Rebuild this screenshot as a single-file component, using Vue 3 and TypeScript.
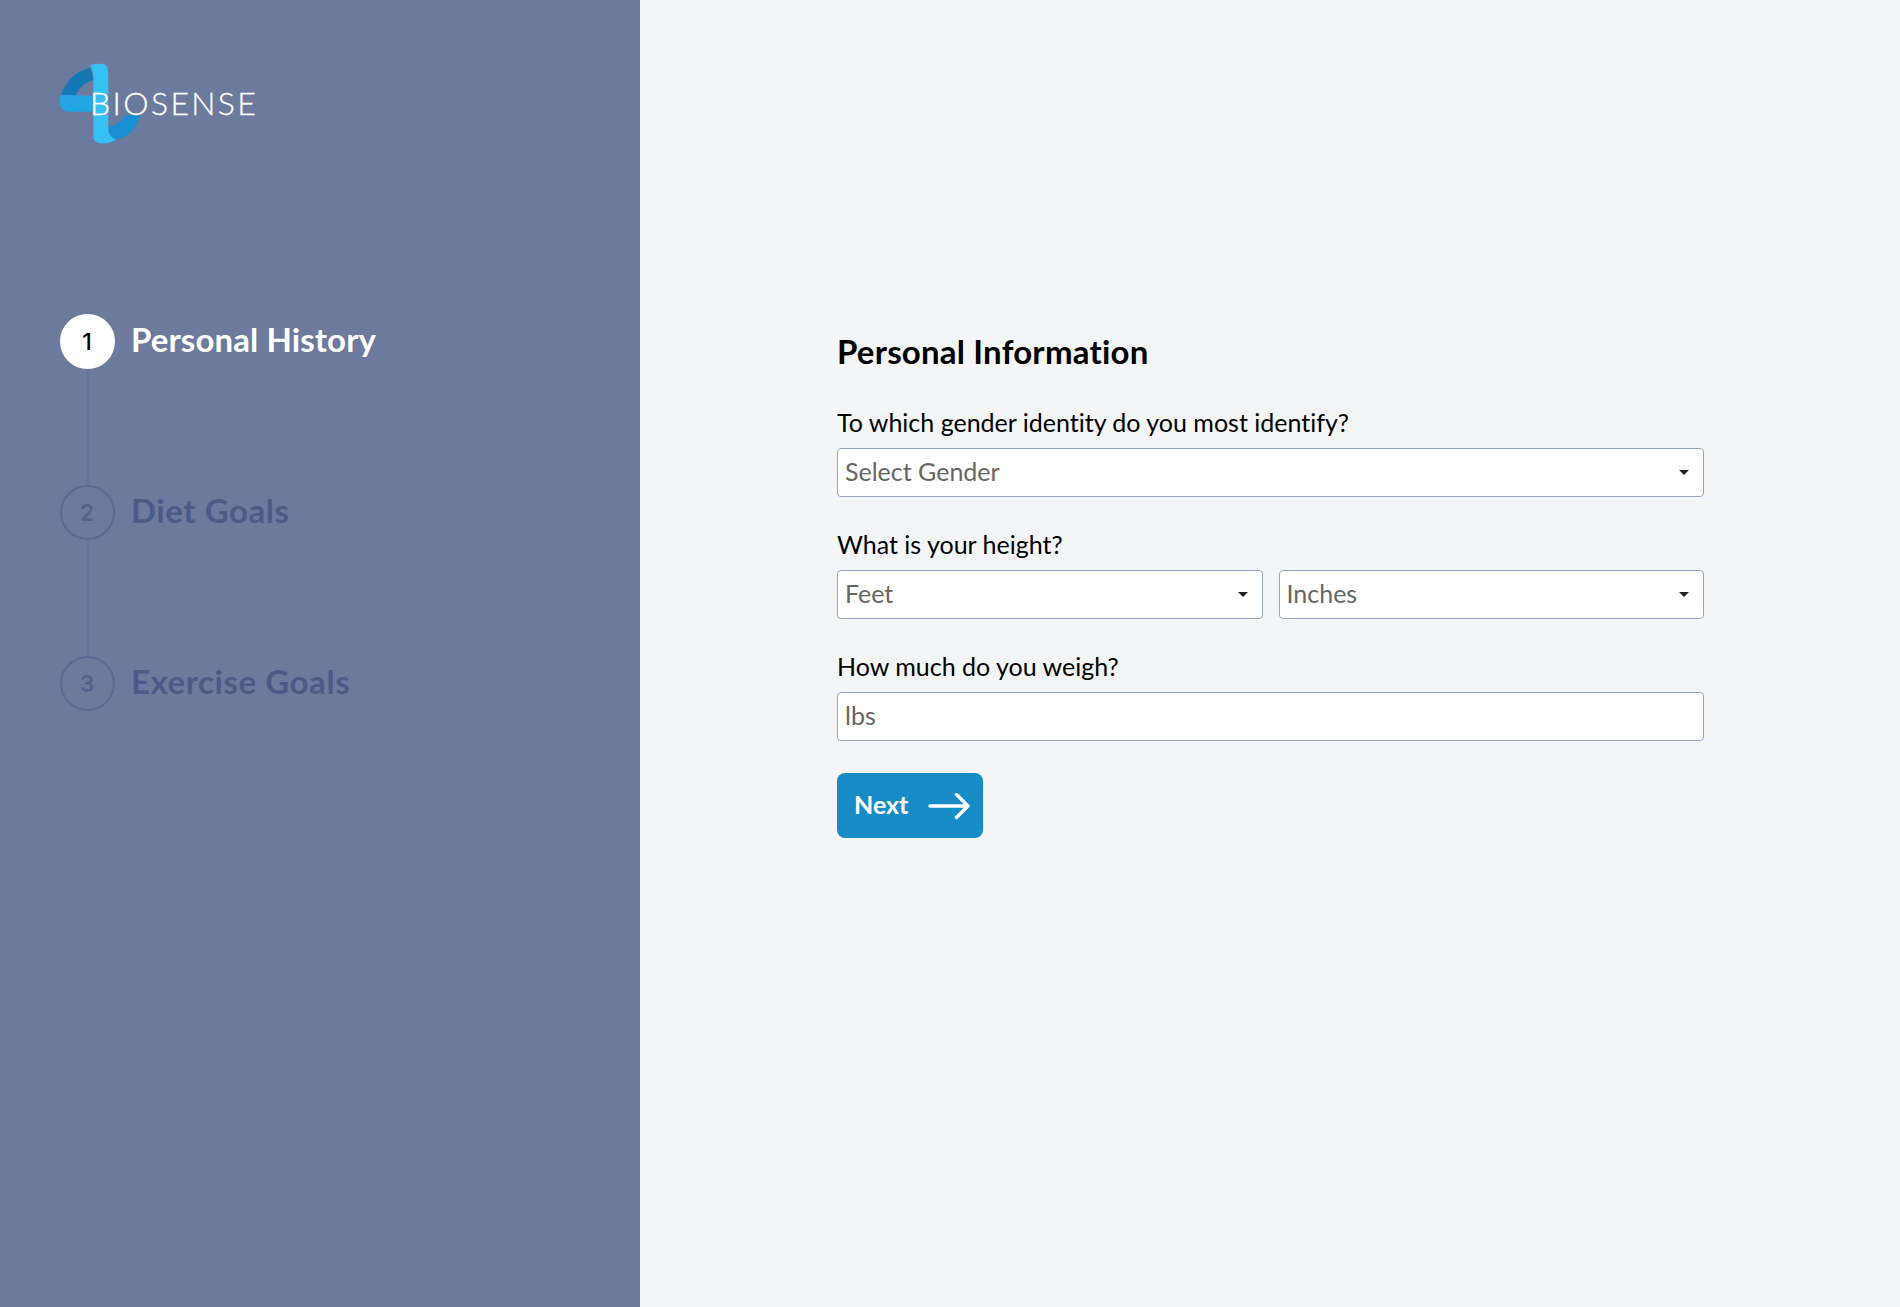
<script setup lang="ts">
interface Step { n: number; label: string; active: boolean }
const steps: Step[] = [
  { n: 1, label: 'Personal History', active: true },
  { n: 2, label: 'Diet Goals', active: false },
  { n: 3, label: 'Exercise Goals', active: false },
]
</script>

<template>
  <div class="page">
    <aside class="side">
      <div class="logo">
        <svg class="mark" viewBox="0 0 720 330" width="240" height="110">
          <path fill="#1578b4" d="M150 54C110 62 75 92 63 137L108 138C116 112 136 96 162 90Z" />
          <path fill="#25a5e2" d="M63 134L108 136L160 137V185H88C70 185 58 172 59 155C59 148 60 141 63 134Z" />
          <path fill="#1a8fd2" d="M205 232C232 222 250 210 256 195H300C292 236 262 264 226 268C212 262 205 250 205 232Z" />
          <path fill="#36c0f3" d="M148 46C166 40 194 38 200 48C205 56 205 72 205 110V238C205 252 214 264 228 269C208 282 166 287 160 264V90C160 70 158 54 148 46Z" />
        </svg>
        <span class="brand">BIOSENSE</span>
      </div>
      <ol class="steps">
        <li v-for="(s, i) in steps" :key="s.n" class="step" :class="{ active: s.active }">
          <div class="step-row">
            <span class="num">{{ s.n }}</span>
            <span class="step-label">{{ s.label }}</span>
          </div>
          <div v-if="i < steps.length - 1" class="conn"></div>
        </li>
      </ol>
    </aside>
    <main class="main">
      <form class="form" @submit.prevent>
        <h1 class="title">Personal Information</h1>
        <label class="lbl">To which gender identity do you most identify?</label>
        <div class="sel">
          <select><option>Select Gender</option></select>
          <i class="caret"></i>
        </div>
        <label class="lbl">What is your height?</label>
        <div class="two">
          <div class="sel">
            <select><option>Feet</option></select>
            <i class="caret"></i>
          </div>
          <div class="sel">
            <select><option>Inches</option></select>
            <i class="caret"></i>
          </div>
        </div>
        <label class="lbl">How much do you weigh?</label>
        <input class="field" placeholder="lbs" />
        <button class="next" type="submit">
          <span class="next-text">Next</span>
          <svg width="42" height="28" viewBox="0 0 42 28" fill="none" stroke="#fff" stroke-width="3.4" stroke-linecap="round" stroke-linejoin="round">
            <path d="M2 14H40M28.5 2.5L40 14L28.5 25.5" />
          </svg>
        </button>
      </form>
    </main>
  </div>
</template>

<style>
html, body { margin: 0; padding: 0; }
</style>

<style scoped>
.page {
  display: flex;
  width: 1900px;
  height: 1307px;
  overflow: hidden;
  font-family: Lato, "Noto Sans", sans-serif;
  font-variant-ligatures: none;
  background: #f4f5f7;
}
.side {
  width: 640px;
  flex: none;
  background: #6c7a9e;
  box-sizing: border-box;
  padding: 50px 0 0 60px;
}
.logo {
  position: relative;
  height: 110px;
  margin: 0 0 154px -20px;
}
.mark { display: block; }
.brand {
  position: absolute;
  left: 50px;
  top: 35px;
  font-size: 32px;
  line-height: 36px;
  font-weight: 300;
  letter-spacing: 2.35px;
  color: #fff;
  -webkit-text-stroke: 0.3px #fff;
}
.steps { list-style: none; margin: 0; padding: 0; }
.step-row { display: flex; align-items: center; gap: 16px; height: 55px; }
.num {
  width: 55px;
  height: 55px;
  box-sizing: border-box;
  padding-right: 1px;
  border-radius: 50%;
  border: 2px solid #5a6a92;
  display: flex;
  align-items: center;
  justify-content: center;
  font-family: Inter, "Liberation Sans", sans-serif;
  font-weight: 600;
  font-size: 23px;
  color: #52628c;
}
.step-label {
  font-size: 33px;
  font-weight: 700;
  letter-spacing: 0.55px;
  color: #4b5b86;
  margin-top: -5px;
}
.active .num { background: #fff; border-color: #fff; color: #000; font-weight: 500; }
.active .step-label { color: #fff; letter-spacing: 0.1px; }
.conn { width: 2px; height: 116px; margin-left: 27px; background: #65739a; }
.main { flex: 1; padding: 0 0 0 197px; }
.form { width: 867px; padding-top: 329px; display: flex; flex-direction: column; }
.title {
  margin: 0;
  font-size: 33px;
  line-height: 44px;
  font-weight: 700;
  letter-spacing: 0.2px;
  color: #000;
}
.lbl {
  font-size: 25px;
  line-height: 32px;
  color: #000;
  margin: 0 0 10px;
}
.title + .lbl { margin-top: 33px; }
.sel + .lbl, .two + .lbl { margin-top: 31px; }
.sel { position: relative; flex: 1; }
.sel select, .field {
  display: block;
  width: 100%;
  height: 49px;
  box-sizing: border-box;
  border: 1px solid #97a3bf;
  border-radius: 4px;
  background: #fff;
  padding: 0 7px 3px;
  font: 400 25px Lato, "Noto Sans", sans-serif;
  font-variant-ligatures: none;
  color: #666;
  appearance: none;
  outline: none;
}
.field::placeholder { color: #666; opacity: 1; }
.caret {
  position: absolute;
  right: 15px;
  top: 22px;
  border-left: 5px solid transparent;
  border-right: 5px solid transparent;
  border-top: 5px solid #222;
}
.two { display: flex; gap: 16px; }
.next {
  margin-top: 32px;
  width: 146px;
  height: 65px;
  display: flex;
  align-items: center;
  gap: 20px;
  padding: 0 0 0 17px;
  border: 0;
  border-radius: 8px;
  background: #178cc7;
  color: #fff;
  font: 700 25px Lato, "Noto Sans", sans-serif;
}
.next-text { margin-top: -4px; }
</style>
